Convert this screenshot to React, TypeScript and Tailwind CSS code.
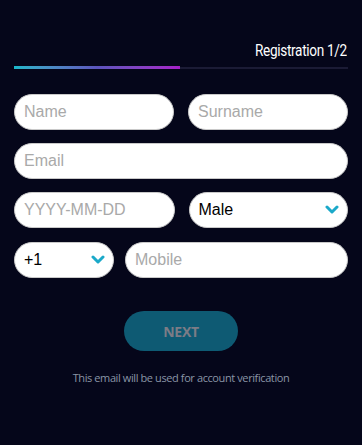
import React from 'react'

const font = { fontFamily: '"Liberation Sans", Arial, sans-serif' }

function Chevron() {
  return (
    <svg width="14" height="10" viewBox="0 0 14 10" className="shrink-0">
      <path d="M2 2 L7 7 L12 2" fill="none" stroke="#1ba9c9" strokeWidth="3" strokeLinecap="round" strokeLinejoin="round" />
    </svg>
  )
}

function Field({ placeholder, className = '' }: { placeholder: string; className?: string }) {
  return (
    <input
      placeholder={placeholder}
      style={font}
      className={`h-[36px] rounded-full border border-[#c9c9c9] bg-white px-[9px] text-[16px] text-black placeholder:text-[#a9a9a9] outline-none min-w-0 ${className}`}
    />
  )
}

function Select({ value, className = '' }: { value: string; className?: string }) {
  return (
    <div
      style={font}
      className={`h-[36px] rounded-full border border-[#c9c9c9] bg-white pl-[9px] pr-[8px] flex items-center justify-between text-[16px] text-black ${className}`}
    >
      <span>{value}</span>
      <Chevron />
    </div>
  )
}

export default function App() {
  return (
    <div
      className="w-[362px] h-[445px] bg-[#05061a] px-[14px] pt-[40px] overflow-hidden"
      style={{ fontFamily: '"Open Sans", sans-serif' }}
    >
      {/* header */}
      <div className="flex justify-end pr-[1px]">
        <span
          className="inline-block text-white text-[17px] tracking-[-0.4px] leading-[20px] scale-x-[0.8] origin-right"
          style={{ fontFamily: 'Roboto, sans-serif' }}
        >
          Registration 1/2
        </span>
      </div>
      <div className="mt-[7px] h-[2px] bg-[#1b1b35] relative">
        <div className="absolute left-0 top-[-1px] h-[3px] w-[166px] bg-gradient-to-r from-[#16b6ca] via-[#5b54bd] to-[#a61ec9]" />
      </div>

      {/* form */}
      <div className="mt-[25px] flex flex-col gap-[13px]">
        <div className="flex gap-[14px]">
          <Field placeholder="Name" className="flex-1" />
          <Field placeholder="Surname" className="flex-1" />
        </div>
        <Field placeholder="Email" className="w-full" />
        <div className="flex gap-[14px]">
          <Field placeholder="YYYY-MM-DD" className="flex-1" />
          <Select value="Male" className="flex-1" />
        </div>
        <div className="flex gap-[11px] mt-[1px]">
          <Select value="+1" className="w-[100px]" />
          <Field placeholder="Mobile" className="flex-1" />
        </div>
      </div>

      <div className="mt-[33px] flex justify-center">
        <button className="w-[114px] h-[40px] rounded-full bg-[#0e5a73] text-[#7c7c86] text-[14px] font-bold tracking-[-0.3px]">
          NEXT
        </button>
      </div>
      <p className="mt-[19px] text-center text-[11px] text-[#8a95a6] tracking-[-0.4px]">
        This email will be used for account verification
      </p>
    </div>
  )
}
